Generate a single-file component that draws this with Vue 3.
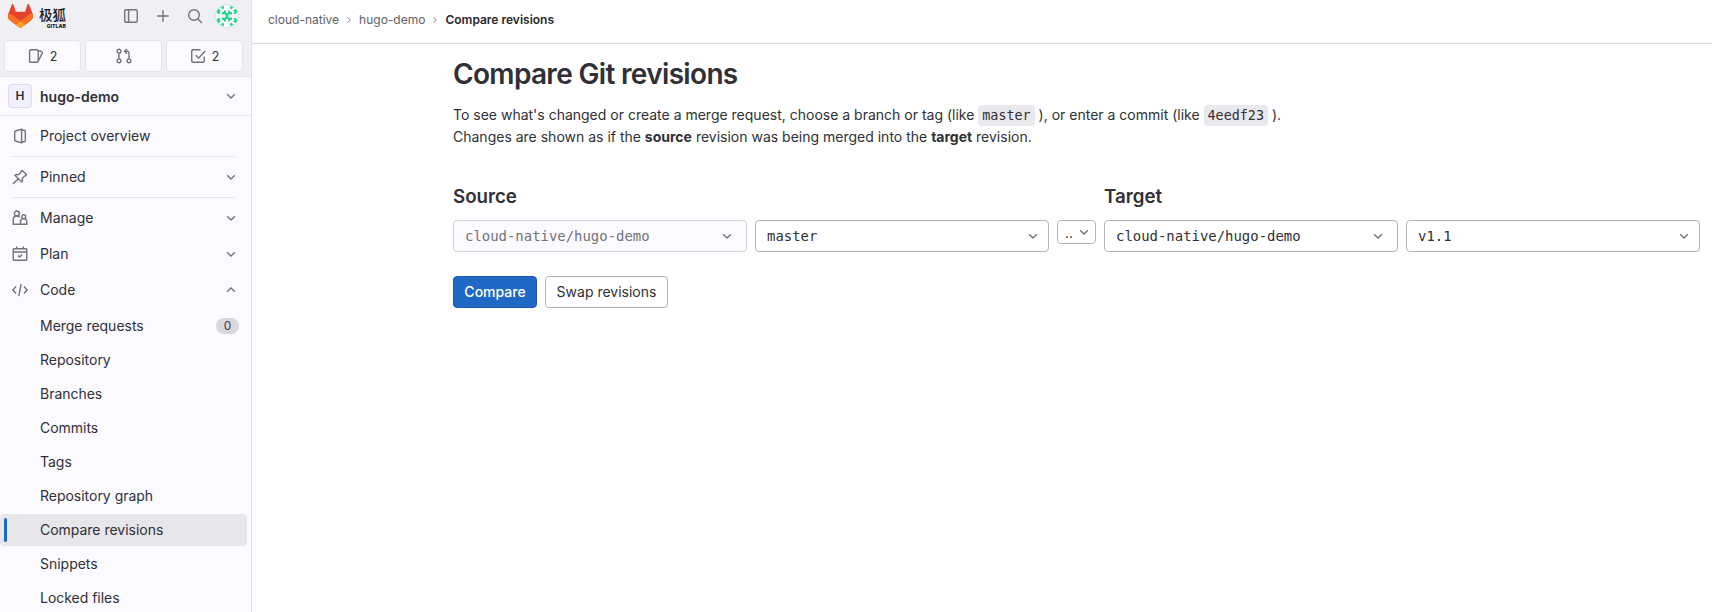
<script setup>
const chevron = 'M4.2 6.3 8 10l3.8-3.7'
const chevronUp = 'M4.2 9.7 8 6l3.8 3.7'
const groups = [
  { name: 'Manage', icon: 'users', d: chevron },
  { name: 'Plan', icon: 'calendar', d: chevron },
  { name: 'Code', icon: 'code', d: chevronUp },
]
const codeItems = [
  { name: 'Merge requests', count: '0' },
  { name: 'Repository' },
  { name: 'Branches' },
  { name: 'Commits' },
  { name: 'Tags' },
  { name: 'Repository graph' },
  { name: 'Compare revisions', active: true },
  { name: 'Snippets' },
  { name: 'Locked files' },
]
</script>

<template>
  <div class="app">
    <aside class="sidebar">
      <div class="top">
        <div class="brand-row">
          <svg class="tanuki" viewBox="0 0 25 24">
            <path d="m24.507 9.5-.034-.09L21.082.562a.896.896 0 0 0-1.694.091l-2.29 7.01H7.825L5.535.653a.898.898 0 0 0-1.694-.09L.451 9.411.416 9.5a6.297 6.297 0 0 0 2.09 7.278l.012.01.03.022 5.16 3.867 2.56 1.935 1.554 1.176a1.051 1.051 0 0 0 1.268 0l1.555-1.176 2.56-1.935 5.197-3.89.014-.01A6.297 6.297 0 0 0 24.507 9.5Z" fill="#E24329" />
            <path d="m24.507 9.5-.034-.09a11.44 11.44 0 0 0-4.56 2.051l-7.447 5.632 4.742 3.584 5.197-3.89.014-.01A6.297 6.297 0 0 0 24.507 9.5Z" fill="#FC6D26" />
            <path d="m7.707 20.677 2.56 1.935 1.555 1.176a1.051 1.051 0 0 0 1.268 0l1.555-1.176 2.56-1.935-4.743-3.584-4.755 3.584Z" fill="#FCA326" />
            <path d="M5.01 11.461a11.43 11.43 0 0 0-4.56-2.05L.416 9.5a6.297 6.297 0 0 0 2.09 7.278l.012.01.03.022 5.16 3.867 4.745-3.584-7.444-5.632Z" fill="#FC6D26" />
          </svg>
          <div class="brand">
            <span class="brand-cn">极狐</span>
            <span class="brand-en">GITLAB</span>
          </div>
          <div class="tools">
            <svg class="ic" viewBox="0 0 16 16"><rect x="1.75" y="1.75" width="12.5" height="12.5" rx="1.2" /><path d="M5.6 2v12" /></svg>
            <svg class="ic" viewBox="0 0 16 16"><path d="M8 2.2v11.6M2.2 8h11.6" /></svg>
            <svg class="ic" viewBox="0 0 16 16"><circle cx="7" cy="7" r="5.3" /><path d="m11 11 3.9 3.9" /></svg>
            <svg class="avatar" viewBox="0 0 24 24">
              <circle cx="12" cy="12" r="11.5" fill="#fff" stroke="#dcdcde" />
              <g fill="#2bd694">
                <path d="M7 8h2V6.500h2V9h2V6.500h2V8h2v2.600h-3.500v2.800H17V16h-2v1.500h-2V15h-2v2.500H9V16H7v-2.600h3.500v-2.800H7Z" />
                <path d="m5.500 3.200 3-1.500.8 2.300-1.800 1.500ZM18.500 3.200l-3-1.500-.8 2.300 1.800 1.500ZM5.500 20.800l3 1.500.8-2.300-1.800-1.500ZM18.500 20.800l-3 1.500-.8-2.300 1.800-1.500Z" />
                <path d="m1.500 8 1.800-3.200L6 6.500 4.500 8.200 6 10.300 3 9.700ZM22.500 8l-1.800-3.200L18 6.500l1.500 1.700L18 10.300l3-.6ZM1.500 16l1.800 3.200L6 17.500l-1.500-1.700L6 13.700l-3 .6ZM22.500 16l-1.800 3.200-2.700-1.700 1.500-1.700-1.500-2.100 3 .6Z" />
              </g>
            </svg>
          </div>
        </div>
        <div class="counters">
          <div class="counter">
            <svg class="ic" viewBox="0 0 16 16"><rect x="1.6" y="1.75" width="8.6" height="12.5" rx="1.2" /><path d="M10.2 3h2.200l1.500.9c.5.3.6.7.4 1.200L10.300 13" /></svg>
            <span>2</span>
          </div>
          <div class="counter">
            <svg class="ic" viewBox="0 0 16 16"><circle cx="3" cy="3.200" r="1.900" /><circle cx="3" cy="12.800" r="1.900" /><circle cx="13" cy="12.800" r="1.900" /><path d="M3 5v6M13 11V5.500c0-1.500-.8-2.200-2.300-2.200H8.800M10.900.9 8.500 3.300l2.400 2.400" /></svg>
          </div>
          <div class="counter">
            <svg class="ic" viewBox="0 0 16 16"><path d="M10.500 1.750H3c-.8 0-1.250.450-1.250 1.250v10c0 .8.450 1.250 1.250 1.250h10c.8 0 1.250-.450 1.250-1.250V8.500M5.800 7.200l2.900 2.900 6.500-7" /></svg>
            <span>2</span>
          </div>
        </div>
      </div>

      <div class="context">
        <span class="letter">H</span>
        <span class="project">hugo-demo</span>
        <svg class="ic chev" viewBox="0 0 16 16"><path :d="chevron" /></svg>
      </div>

      <nav class="nav">
        <div class="item">
          <svg class="ic" viewBox="0 0 16 16"><path d="M9.600 1.200v13.600L3.500 13c-.5-.2-.8-.5-.8-1.100V4.100c0-.6.300-.9.800-1.100ZM9.600 2.300h2.500c.8 0 1.200.4 1.200 1.200v9c0 .8-.4 1.200-1.200 1.200H9.600" /></svg>
          <span>Project overview</span>
        </div>
        <hr />
        <div class="item">
          <svg class="ic" viewBox="0 0 16 16"><path d="m1 15 5.200-5.200M10.200 1.500l4.300 4.300c-.3 1-1 1.400-1.900 1.300L10.300 9.400c.5 1.400.3 2.600-.6 3.600L3 6.300c1-.9 2.200-1.100 3.600-.6l2.300-2.300c-.1-.9.3-1.600 1.300-1.900Z" /></svg>
          <span>Pinned</span>
          <svg class="ic chev" viewBox="0 0 16 16"><path :d="chevron" /></svg>
        </div>
        <hr />
        <div v-for="g in groups" :key="g.name" class="item group">
          <svg v-if="g.icon === 'users'" class="ic" viewBox="0 0 16 16"><circle cx="4.800" cy="3.500" r="2.500" /><path d="M7.800 14.250H1.250V9.300c0-2 1.400-3.300 3.500-3.300 1.300 0 2.400.5 3 1.500" /><circle cx="11.800" cy="6.700" r="1.900" /><path d="M8.500 14.250v-2.700c0-1.700 1.200-2.900 3.150-2.900s3.150 1.200 3.150 2.900v2.700Z" /></svg>
          <svg v-else-if="g.icon === 'calendar'" class="ic" viewBox="0 0 16 16"><rect x="1.250" y="2.750" width="13.500" height="11.500" rx=".8" /><path d="M1.500 6h13M4.700.6v2M11.300.6v2M5.900 9.600l1.600 1.500 2.700-2.700" /></svg>
          <svg v-else class="ic" viewBox="0 0 16 16"><path d="M4 4.500.9 8 4 11.500M12 4.500 15.100 8 12 11.500M9.200 2 6.800 14" /></svg>
          <span>{{ g.name }}</span>
          <svg class="ic chev" viewBox="0 0 16 16"><path :d="g.d" /></svg>
        </div>
        <div v-for="c in codeItems" :key="c.name" class="item sub" :class="{ active: c.active }">
          <span>{{ c.name }}</span>
          <span v-if="c.count" class="badge">{{ c.count }}</span>
        </div>
      </nav>
    </aside>

    <main class="main">
      <header class="crumbs">
        <span>cloud-native</span>
        <svg class="sep" viewBox="0 0 8 12"><path d="m2.500 3.200 2.800 2.800-2.800 2.800" /></svg>
        <span>hugo-demo</span>
        <svg class="sep" viewBox="0 0 8 12"><path d="m2.500 3.200 2.800 2.800-2.800 2.800" /></svg>
        <b>Compare revisions</b>
      </header>
      <section class="content">
        <h1>Compare Git revisions</h1>
        <p>To see what's changed or create a merge request, choose a branch or tag (like <code>master</code> ), or enter a commit (like <code>4eedf23</code> ).</p>
        <p>Changes are shown as if the <b>source</b> revision was being merged into the <b>target</b> revision.</p>
        <div class="compare">
          <div class="side">
            <h2>Source</h2>
            <div class="pair">
              <div class="select disabled wide-pad"><span>cloud-native/hugo-demo</span><svg class="ic" viewBox="0 0 16 16"><path :d="chevron" /></svg></div>
              <div class="select"><span>master</span><svg class="ic" viewBox="0 0 16 16"><path :d="chevron" /></svg></div>
            </div>
          </div>
          <div class="dots"><span>..</span><svg class="ic" viewBox="0 0 16 16"><path :d="chevron" /></svg></div>
          <div class="side">
            <h2>Target</h2>
            <div class="pair">
              <div class="select wide-pad"><span>cloud-native/hugo-demo</span><svg class="ic" viewBox="0 0 16 16"><path :d="chevron" /></svg></div>
              <div class="select"><span>v1.1</span><svg class="ic" viewBox="0 0 16 16"><path :d="chevron" /></svg></div>
            </div>
          </div>
        </div>
        <div class="actions">
          <button class="btn primary">Compare</button>
          <button class="btn">Swap revisions</button>
        </div>
      </section>
    </main>
  </div>
</template>

<style>
html, body { margin: 0; overflow: hidden; }
</style>

<style scoped>
* { box-sizing: border-box; }
.app {
  display: flex;
  width: 1712px;
  height: 612px;
  overflow: hidden;
  font-family: Inter, "Noto Sans CJK SC", sans-serif;
  font-size: 14px;
  color: #303036;
  background: #fff;
}
.ic {
  width: 16px;
  height: 16px;
  flex: none;
  fill: none;
  stroke: #737278;
  stroke-width: 1.4;
}
.sidebar {
  width: 252px;
  flex: none;
  background: #fbfaff;
  border-right: 1px solid #e3e3e8;
}
.top { height: 77px; background: #f0eff4; border-bottom: 1px solid #e5e4ea; }
.brand-row { display: flex; height: 40px; padding: 4px 12px 0 8px; }
.tanuki { width: 25px; height: 24px; }
.brand { width: 28px; margin-left: 6px; padding-top: 4px; display: flex; flex-direction: column; color: #171321; }
.brand-cn { font: 500 13.5px/15px "Noto Sans CJK SC", sans-serif; height: 16px; margin-top: -1px; white-space: nowrap; }
.brand-en { font: 800 5.2px/6px Inter, sans-serif; text-align: right; padding-right: 1px; }
.tools { display: flex; margin-left: auto; padding-top: 4px; gap: 16px; }
.avatar { width: 24px; height: 24px; margin: -4px 0 0 -4px; }
.counters { display: flex; gap: 4px; padding-left: 4px; }
.counter {
  width: 77px;
  height: 32px;
  display: flex;
  align-items: center;
  justify-content: center;
  gap: 6px;
  background: #fbfaff;
  border: 1px solid #e5e4ea;
  border-radius: 4px;
  font-size: 12.5px;
}
.context { height: 39px; display: flex; align-items: center; padding: 0 12px 0 8px; border-bottom: 1px solid #e5e4ea; }
.letter {
  width: 24px;
  height: 24px;
  border-radius: 4px;
  border: 1px solid #dcdaf0;
  background: #f1f0ff;
  font-weight: 600;
  font-size: 12px;
  line-height: 22px;
  text-align: center;
}
.project { font-weight: 600; margin-left: 8px; }
.chev { margin-left: auto; }
.nav { padding-top: 4px; }
.item { height: 32px; display: flex; align-items: center; padding: 0 12px; }
.item span { white-space: nowrap; }
.item span:not(.badge) { padding-bottom: 2px; }
.item > .ic:first-child + span { margin-left: 12px; }
.item + .sub { margin-top: 2px; }
.group { margin-bottom: 4px; }
.group + .sub { margin-top: 0; }
hr { height: 1px; border: 0; margin: 4px 16px 4px 12px; background: #e5e4ea; }
.sub { padding-left: 40px; letter-spacing: -.02px; }
.badge {
  width: 23px;
  height: 16px;
  margin-left: auto;
  border-radius: 8px;
  background: #d9d8db;
  color: #434248;
  font-size: 12px;
  line-height: 16px;
  text-align: center;
}
.active { width: 247px; position: relative; background: #e7e6eb; border-radius: 4px; }
.active::before { content: ""; position: absolute; left: 4px; top: 4px; width: 3px; height: 24px; border-radius: 2px; background: #1f68c6; }
.main { flex: 1; }
.crumbs { height: 44px; display: flex; align-items: center; padding: 0 16px 4px; border-bottom: 1px solid #d5d5d9; font-size: 12px; color: #626168; }
.crumbs b { font-weight: 600; color: #28272d; }
.sep { width: 8px; height: 12px; margin: 0 6px; fill: none; stroke: #8b8a91; }
.content { padding-left: 201px; }
h1 { margin: 12px 0 12px; font-size: 28px; line-height: 36px; font-weight: 600; letter-spacing: -.67px; }
p { margin: 0; height: 22px; line-height: 22px; white-space: nowrap; }
p + p { height: 24px; }
p b { font-weight: 700; }
code { padding: 3px 4px; border-radius: 4px; background: #e9e8ed; font-family: "DejaVu Sans Mono", monospace; font-size: 13.4px; line-height: 16px; }
.compare { display: flex; gap: 8px; align-items: flex-start; margin-top: 35px; }
.side { width: 596px; }
h2 { margin: 0 0 11px; font-size: 18.7px; line-height: 24px; font-weight: 600; }
.pair { display: flex; gap: 8px; }
.select {
  width: 294px;
  height: 32px;
  display: flex;
  align-items: center;
  justify-content: space-between;
  padding: 0 7px 0 11px;
  border: 1px solid #b3b3b8;
  border-radius: 4px;
  font-family: "DejaVu Sans Mono", monospace;
  font-size: 13.95px;
}
.wide-pad { padding-right: 11px; }
.disabled { background: #fbfaff; border-color: #d5d5d9; color: #737278; }
.dots { width: 39px; height: 24px; margin-top: 35px; display: flex; align-items: center; padding: 0 3px 0 7px; justify-content: space-between; border: 1px solid #b3b3b8; border-radius: 4px; }
.actions { display: flex; gap: 8px; margin-top: 24px; }
.btn { height: 32px; width: 123px; padding: 0 0 1px; border: 1px solid #b3b3b8; border-radius: 4px; background: #fff; color: #303036; font: 400 14px Inter, sans-serif; }
.primary { width: 84px; background: #1f68c6; border-color: #1b5cb0; color: #fff; font-weight: 500; }
</style>
